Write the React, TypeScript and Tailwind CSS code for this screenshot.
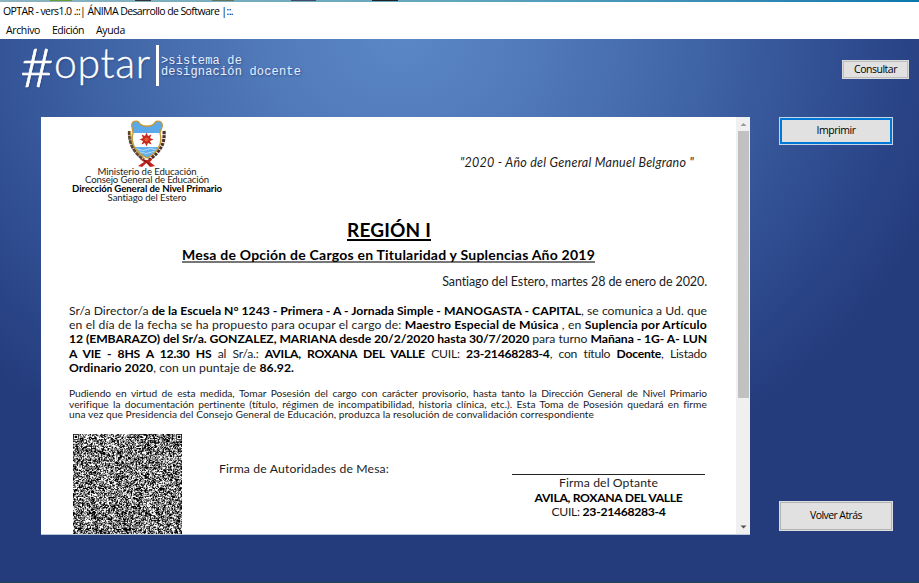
import { useLayoutEffect, useMemo, useRef, type ReactNode } from "react";

/** Single line of text whose tracking is adjusted to fill the given width. */
function Fit({ w, className = "", children }: { w: number; className?: string; children: ReactNode }) {
  const ref = useRef<HTMLSpanElement>(null);
  useLayoutEffect(() => {
    const el = ref.current;
    if (!el) return;
    el.style.letterSpacing = "0px";
    const natural = el.getBoundingClientRect().width;
    const count = (el.textContent || "").length;
    el.style.letterSpacing = `${(w - natural) / count}px`;
  }, [w]);
  return (
    <span ref={ref} className={`inline-block whitespace-pre ${className}`}>
      {children}
    </span>
  );
}

function Crest() {
  return (
    <svg width="40" height="48" viewBox="0 0 40 48" className="block">
      <path d="M2.500 11 C2 23 6 31 17 40" fill="none" stroke="#5a4632" strokeWidth="3.200" strokeDasharray="4 .6" />
      <path d="M37 11 C38 23 34 31 22 40" fill="none" stroke="#4a3028" strokeWidth="3.200" strokeDasharray="3 1" />
      <path d="M3.500 11 C4 22 7 31 18 39" fill="none" stroke="#c9a24a" strokeWidth="1" />
      <clipPath id="shield">
        <path d="M5 7 C3 1 11 -1 13 4 C16 7 24 7 27 4 C29 -1 37 1 35 7 L33 13 C36 24 31 32 20 38 C9 32 3 24 6 13 Z" />
      </clipPath>
      <g clipPath="url(#shield)">
        <rect width="40" height="40" fill="#5ba9ea" />
        <rect y="13" width="40" height="14" fill="#fff" />
        <rect y="27" width="40" height="13" fill="#62b0ee" />
        <path d="M4 29.500 q4 -2 8 0 t8 0 t8 0 t8 0 M7 32.500 q4 -2 8 0 t8 0 t8 0" fill="none" stroke="#c4e4fb" strokeWidth=".8" />
      </g>
      <path
        d="M5 7 C3 1 11 -1 13 4 C16 7 24 7 27 4 C29 -1 37 1 35 7 L33 13 C36 24 31 32 20 38 C9 32 3 24 6 13 Z"
        fill="none"
        stroke="#c39a35"
        strokeWidth="1.300"
      />
      <path
        d="M19.500 12.500 L21 16 L24.500 14.500 L23 18 L26.500 19.500 L23 21 L24.500 24.500 L21 23 L19.500 26.500 L18 23 L14.500 24.500 L16 21 L12.500 19.500 L16 18 L14.500 14.500 L18 16 Z"
        fill="#c92a1c"
      />
      <circle cx="19.500" cy="19.500" r="2" fill="#e25a30" />
      <path d="M13 39 L20 40 L26 38 L23 42 L28 46 L23 47 L19.500 43 L15 47 L11 46 L17 42 Z" fill="#c4231d" />
      <path d="M17 40 L23 45" stroke="#5c1515" strokeWidth="1" />
    </svg>
  );
}

const QR = 133;

function QrCode() {
  const d = useMemo(() => {
    let seed = 20200128;
    const next = () => {
      seed = (seed * 1664525 + 1013904223) >>> 0;
      return seed / 4294967296;
    };
    const finder = (x: number, y: number) => {
      const ring = Math.max(Math.abs(x - 3), Math.abs(y - 3));
      return ring === 3 || ring <= 1;
    };
    let out = "";
    for (let y = 0; y < QR; y++) {
      for (let x = 0; x < QR; x++) {
        const r = next();
        let on = r < 0.52;
        if (y < 8 && x < 8) on = x < 7 && y < 7 && finder(x, y);
        else if (y < 8 && x > QR - 9) on = x > QR - 8 && y < 7 && finder(x - QR + 7, y);
        if (on) out += `M${x} ${y}h1v1h-1z`;
      }
    }
    return out;
  }, []);
  return (
    <svg width="109" height="109" viewBox={`0 0 ${QR} ${QR}`} className="block shrink-0">
      <path d={d} fill="#000" />
    </svg>
  );
}

function Arrow({ up }: { up?: boolean }) {
  return (
    <svg width="13" height="14" viewBox="0 0 13 14" className="block">
      <path d={up ? "M3.500 9 L6.500 6 L9.500 9 Z" : "M3.500 5.500 L6.500 8.500 L9.500 5.500 Z"} fill={up ? "#9a9a9a" : "#505050"} />
    </svg>
  );
}

const line = "flex h-[14.25px] items-center";
const small = "flex h-[10.8px] items-center";
const head = "flex h-[8.7px] items-center";

function Documento() {
  return (
    <div className="flex h-[418px] w-[709px] shrink-0 overflow-hidden border-b border-[#b9c6de] bg-white font-['Lato',sans-serif] text-[12.2px] leading-none text-[#1c1c1c]">
      <div className="w-[695px] shrink-0 overflow-hidden">
        <div className="flex justify-between">
          <div className="ml-[31px] flex w-[150px] flex-col items-center pt-[3px] text-[9.6px]">
            <Crest />
            <div className="-mt-[0.5px] flex flex-col items-center">
              <div className={head}><Fit w={99} className="leading-[8.7px]">Ministerio de Educación</Fit></div>
              <div className={head}><Fit w={124} className="leading-[8.7px]">Consejo General de Educación</Fit></div>
              <div className={`${head} font-bold text-black`}><Fit w={150} className="leading-[8.7px]">Dirección General de Nivel Primario</Fit></div>
              <div className={head}><Fit w={79} className="leading-[8.7px]">Santiago del Estero</Fit></div>
            </div>
          </div>
          <div className="mr-[42px] pt-[40px] text-[12.5px] italic">
            <Fit w={234}>"2020 - Año del General Manuel Belgrano "</Fit>
          </div>
        </div>
        <div className="flex justify-center pl-[1px] pt-[18.5px] text-[19px] font-bold text-black">
          <Fit w={84} className="h-[20px] border-b-2 border-black leading-[18px]">REGIÓN I</Fit>
        </div>
        <div className="flex justify-center pt-[7px] text-[14px] font-bold text-black">
          <Fit w={413} className="h-[15px] border-b-2 border-[#777] leading-[14px]">Mesa de Opción de Cargos en Titularidad y Suplencias Año 2019</Fit>
        </div>
        <div className="flex h-[26px] items-end justify-end pr-[29px] text-[12.5px]">
          <Fit w={265}>Santiago del Estero, martes 28 de enero de 2020.</Fit>
        </div>
        <div className="ml-[28px] pt-[15px] [&_b]:text-black">
          <div className={line}><Fit w={638}>Sr/a Director/a <b>de la Escuela N° 1243 - Primera - A - Jornada Simple - MANOGASTA - CAPITAL</b>, se comunica a Ud. que</Fit></div>
          <div className={line}><Fit w={638}>en el día de la fecha se ha propuesto para ocupar el cargo de: <b>Maestro Especial de Música</b> , en <b>Suplencia por Artículo</b></Fit></div>
          <div className={line}><Fit w={638}><b>12 (EMBARAZO) del Sr/a. GONZALEZ, MARIANA desde 20/2/2020 hasta 30/7/2020</b> para turno <b>Mañana - 1G- A- LUN</b></Fit></div>
          <div className={line}><Fit w={638} className="[word-spacing:3.5px]"><b>A VIE - 8HS A 12.30 HS</b> al Sr/a.: <b>AVILA, ROXANA DEL VALLE</b> CUIL: <b>23-21468283-4</b>, con título <b>Docente</b>, Listado</Fit></div>
          <div className={line}><Fit w={225}><b>Ordinario 2020</b>, con un puntaje de <b>86.92.</b></Fit></div>
        </div>
        <div className="ml-[28px] pt-[12.5px] text-[10.2px]">
          <div className={small}><Fit w={638} className="[word-spacing:2px]">Pudiendo en virtud de esta medida, Tomar Posesión del cargo con carácter provisorio, hasta tanto la Dirección General de Nivel Primario</Fit></div>
          <div className={small}><Fit w={638} className="[word-spacing:1.5px]">verifique la documentación pertinente (título, régimen de incompatibilidad, historia clínica, etc.). Esta Toma de Posesión quedará en firme</Fit></div>
          <div className={small}><Fit w={525}>una vez que Presidencia del Consejo General de Educación, produzca la resolución de convalidación correspondiente</Fit></div>
        </div>
        <div className="ml-[32px] mt-[14.5px] flex h-[110px] items-start overflow-hidden">
          <QrCode />
          <div className="ml-[37px] mt-[29px]"><Fit w={170}>Firma de Autoridades de Mesa:</Fit></div>
          <div className="ml-[123px] mt-[40px] flex w-[193px] flex-col items-center border-t border-[#222] pt-[1px]">
            <div className={line}><Fit w={99}>Firma del Optante</Fit></div>
            <div className={`${line} font-bold text-black`}><Fit w={148}>AVILA, ROXANA DEL VALLE</Fit></div>
            <div className={line}><Fit w={114}>CUIL: <b className="text-black">23-21468283-4</b></Fit></div>
          </div>
        </div>
      </div>
      <div className="flex w-[14px] shrink-0 flex-col items-center bg-[#f0f0f0]">
        <Arrow up />
        <div className="h-[267px] w-[11px] bg-[#c1c1c1]" />
        <div className="flex-1" />
        <Arrow />
      </div>
    </div>
  );
}

function Boton({ className, w, children }: { className: string; w: number; children: string }) {
  return (
    <button className={`flex items-center justify-center bg-[#e1e1e1] pb-[1px] text-[10.5px] leading-none text-black ${className}`}>
      <Fit w={w}>{children}</Fit>
    </button>
  );
}

export default function App() {
  return (
    <div className="flex h-[583px] w-[919px] flex-col overflow-hidden bg-[#243c7c] font-['Open_Sans','Noto_Sans',sans-serif]">
      <div className="flex h-[2px] bg-gradient-to-r from-[#8db3bf] via-[#5fa6bd] to-[#0878ad]">
        <div className="ml-[50px] h-px w-[22px] bg-[#6c9c32]" />
        <div className="ml-[63px] h-px w-[16px] bg-[#333]" />
        <div className="ml-[61px] h-px w-[22px] bg-[#65755b]" />
        <div className="ml-[57px] h-px w-[25px] bg-[#454b66]" />
        <div className="ml-[56px] h-px w-[26px] bg-[#222]" />
      </div>
      <header className="h-[37px] bg-white text-[10.5px] leading-none text-black">
        <div className="flex h-[19px] items-center pl-[3px]">
          <Fit w={230}>OPTAR - vers1.0 .::| ÁNIMA Desarrollo de Software |::.</Fit>
        </div>
        <nav className="flex h-[18px] items-center gap-[12px] pl-[6px] pt-[1px]">
          <Fit w={34}>Archivo</Fit>
          <Fit w={32}>Edición</Fit>
          <Fit w={29}>Ayuda</Fit>
        </nav>
      </header>
      <main className="flex h-[543px] flex-col bg-[radial-gradient(ellipse_570px_470px_at_400px_0px,#5b87c7_0%,#5079b9_25%,#4166a8_50%,#2f4d90_78%,#243c7c_100%)]">
        <div className="flex h-[78px] items-start justify-between pl-[22px] pr-[10px]">
          <div className="flex items-start pt-[6px] text-white">
            <div className="flex h-[44px] items-start leading-[44px] [text-shadow:1px_1px_2px_rgba(30,50,100,.5)]">
              <span className="-ml-[2px] mr-[2px] inline-block w-[32px] origin-left scale-x-[1.1] font-['Lato',sans-serif] text-[53px] font-light [-webkit-text-stroke:0.6px_white]">#</span>
              <Fit w={97} className="-mt-[4px] font-['Lato',sans-serif] text-[41px] font-light [-webkit-text-stroke:0.3px_white]">optar</Fit>
            </div>
            <div className="ml-[5px] h-[41px] w-[3px] bg-white" />
            <div className="ml-[2px] mt-[11px] font-['Liberation_Mono',monospace] text-[12px] leading-[10.5px] text-[#e6efff] [text-shadow:1px_1px_2px_rgba(30,50,100,.6)]">
              <div className="h-[10.5px]"><Fit w={81}>&gt;sistema de</Fit></div>
              <div className="h-[10.5px]"><Fit w={140}>designación docente</Fit></div>
            </div>
          </div>
          <Boton w={43} className="mt-[21px] h-[19px] w-[67px] border-2 border-[#c0bcbc] outline outline-1 -outline-offset-1 outline-[#dcdcdc]">Consultar</Boton>
        </div>
        <div className="flex h-[418px] gap-[29px] pl-[41px]">
          <Documento />
          <div className="flex h-[414px] w-[114px] flex-col justify-between">
            <Boton w={39} className="h-[28px] border-[3px] border-[#0078d7] outline outline-1 -outline-offset-1 outline-[#c7d5e8]">Imprimir</Boton>
            <Boton w={52} className="h-[30px] border-2 border-[#b4b4b4] outline outline-1 -outline-offset-1 outline-[#dedede]">Volver Atrás</Boton>
          </div>
        </div>
      </main>
      <footer className="h-px bg-[#214652]" />
    </div>
  );
}
